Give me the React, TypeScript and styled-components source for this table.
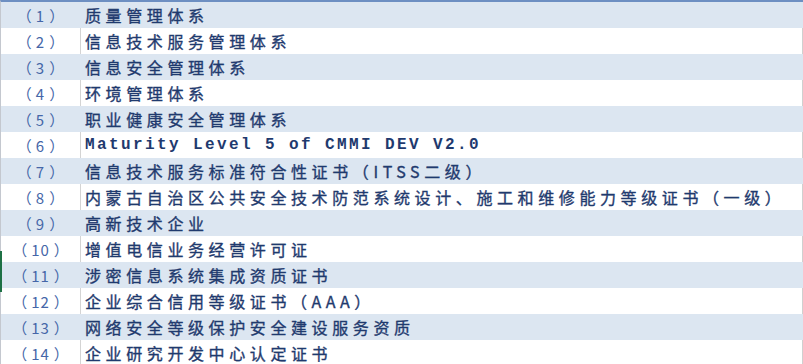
import styled, { createGlobalStyle } from 'styled-components';

const items: string[] = [
  '质量管理体系',
  '信息技术服务管理体系',
  '信息安全管理体系',
  '环境管理体系',
  '职业健康安全管理体系',
  'Maturity Level 5 of CMMI DEV V2.0',
  '信息技术服务标准符合性证书（ITSS二级）',
  '内蒙古自治区公共安全技术防范系统设计、施工和维修能力等级证书（一级）',
  '高新技术企业',
  '增值电信业务经营许可证',
  '涉密信息系统集成资质证书',
  '企业综合信用等级证书（AAA）',
  '网络安全等级保护安全建设服务资质',
  '企业研究开发中心认定证书',
];

const GlobalStyle = createGlobalStyle`
  html, body {
    margin: 0;
    padding: 0;
    background: #ffffff;
    overflow: hidden;
  }
  body {
    font-family: "Noto Sans CJK SC", "Noto Sans", sans-serif;
  }
`;

const App = () => {
  return (
    <>
      <GlobalStyle />
      <Sheet>
        {items.map((text, index) => {
          const latin = /^[A-Za-z]/.test(text);
          return (
            <Row key={index} $shaded={index % 2 === 0}>
              <NumCell $shaded={index % 2 === 0}>
                （<Digits>{index + 1}</Digits>）
              </NumCell>
              <TextCell $latin={latin}>{text}</TextCell>
            </Row>
          );
        })}
        <SelectMark />
      </Sheet>
    </>
  );
};

export default App;

const Sheet = styled.div`
  position: relative;
  width: 803px;
  border-top: 2px solid #6d8fc2;
  border-left: 1px solid #c4c8cf;
  box-sizing: border-box;
`;

const Row = styled.div<{ $shaded: boolean }>`
  display: grid;
  grid-template-columns: 80px 1fr;
  height: 26px;
  background-color: ${({ $shaded }) => ($shaded ? '#dce6f1' : '#ffffff')};
  border-right: 1px solid ${({ $shaded }) => ($shaded ? '#dce6f1' : '#d0d0d0')};
`;

const NumCell = styled.div<{ $shaded: boolean }>`
  display: flex;
  align-items: center;
  justify-content: center;
  font-size: 15px;
  color: #4566a8;
  border-right: 1px solid ${({ $shaded }) => ($shaded ? '#dce6f1' : '#d4d4d4')};
  white-space: nowrap;
`;

const Digits = styled.span`
  padding: 0 4px;
  letter-spacing: 1px;
`;

const TextCell = styled.div<{ $latin: boolean }>`
  display: flex;
  align-items: center;
  padding-left: 4px;
  font-family: ${({ $latin }) =>
    $latin ? '"Liberation Mono", monospace' : '"Noto Sans CJK SC", sans-serif'};
  font-size: 16px;
  font-weight: ${({ $latin }) => ($latin ? 700 : 400)};
  letter-spacing: ${({ $latin }) => ($latin ? '2.4px' : '4.6px')};
  -webkit-text-stroke: ${({ $latin }) => ($latin ? '0' : '0.35px')} currentColor;
  color: #1f3a6e;
  white-space: nowrap;
  overflow: hidden;
`;

const SelectMark = styled.div`
  position: absolute;
  left: -1px;
  top: 249px;
  width: 2px;
  height: 41px;
  background: #1e7145;
`;
